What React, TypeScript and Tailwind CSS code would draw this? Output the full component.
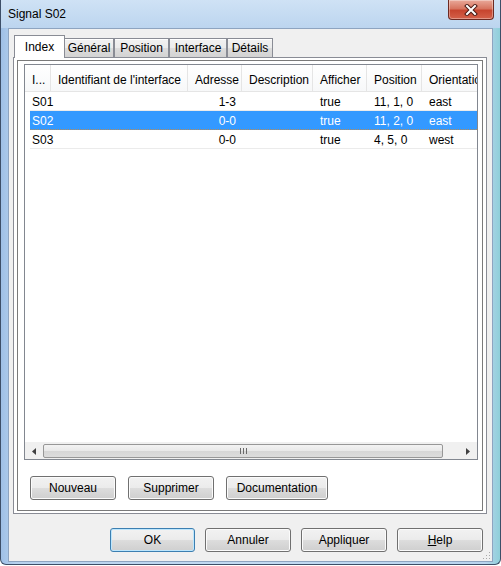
import React from 'react';

type Col = { label: string; w: number };

const cols: Col[] = [
  { label: 'I...', w: 26 },
  { label: "Identifiant de l'interface", w: 137 },
  { label: 'Adresse', w: 54 },
  { label: 'Description', w: 71 },
  { label: 'Afficher', w: 54 },
  { label: 'Position', w: 55 },
  { label: 'Orientation', w: 90 },
];

const rows = [
  { id: 'S01', adr: '1-3', show: 'true', pos: '11, 1, 0', ori: 'east' },
  { id: 'S02', adr: '0-0', show: 'true', pos: '11, 2, 0', ori: 'east', sel: true },
  { id: 'S03', adr: '0-0', show: 'true', pos: '4, 5, 0', ori: 'west' },
];

const btn =
  'h-[24px] border rounded-[3px] bg-[linear-gradient(#f2f2f2_0%,#ebebeb_50%,#dddddd_50%,#cfcfcf_100%)] text-[12px] text-black flex items-center justify-center';

const Button = ({ label, w, primary }: { label: React.ReactNode; w: number; primary?: boolean }) => (
  <div
    className={
      btn +
      (primary
        ? ' border-[#3c7fb1] shadow-[inset_0_0_0_1px_#bde6fd]'
        : ' border-[#707070] shadow-[inset_0_0_0_1px_#fbfbfb]')
    }
    style={{ width: w }}
  >
    {label}
  </div>
);

const Tab = ({ label, w, active }: { label: string; w: number; active?: boolean }) =>
  active ? (
    <div
      className="relative z-10 h-[23px] -mb-px -mr-px border border-b-0 border-[#898c95] bg-white flex items-center justify-center text-[12px] pb-[1px]"
      style={{ width: w }}
    >
      {label}
    </div>
  ) : (
    <div
      className="h-[19px] border border-b-0 border-[#898c95] bg-[linear-gradient(#f2f2f2,#ebebeb_50%,#dddddd_50%,#d3d3d3)] flex items-center justify-center text-[12px] shadow-[inset_0_1px_0_#fff]"
      style={{ width: w }}
    >
      {label}
    </div>
  );

const CloseButton = () => (
  <div className="w-[46px] h-[20px] rounded-b-[4px] border border-t-0 border-[#6d2a22] bg-[linear-gradient(#e9a99a,#d77560_45%,#c7452f_55%,#d4614a)] shadow-[inset_0_0_0_1px_rgba(255,255,255,0.35)] flex items-center justify-center">
    <svg width="14" height="12" viewBox="0 0 14 12">
      <path d="M3 2 L11 10 M11 2 L3 10" stroke="#4a1a14" strokeWidth="4" strokeLinecap="square" />
      <path d="M3 2 L11 10 M11 2 L3 10" stroke="#ffffff" strokeWidth="2" strokeLinecap="square" />
    </svg>
  </div>
);

const ScrollBar = () => (
  <div className="h-[17px] flex bg-[#f0f0f0] border-t border-[#f0f0f0]">
    <div className="w-[18px] flex items-center justify-center">
      <svg width="4" height="7" viewBox="0 0 4 7">
        <path d="M4 0 L0 3.5 L4 7 Z" fill="#404040" />
      </svg>
    </div>
    <div className="w-[400px] my-[1px] rounded-[2px] border border-[#979797] bg-[linear-gradient(#f3f3f3,#e8e8e8_50%,#d6d6d6_50%,#dcdcdc)] flex items-center justify-center">
      <svg width="7" height="6" viewBox="0 0 7 6">
        <path d="M0.5 0 V6 M3.5 0 V6 M6.5 0 V6" stroke="#6a6a6a" strokeWidth="1" />
      </svg>
    </div>
    <div className="flex-1 flex items-center justify-end pr-[7px]">
      <svg width="4" height="7" viewBox="0 0 4 7">
        <path d="M0 0 L4 3.5 L0 7 Z" fill="#404040" />
      </svg>
    </div>
  </div>
);

const Table = () => (
  <div className="w-[454px] h-[396px] border border-[#828790] bg-white flex flex-col overflow-hidden">
    <div className="h-[27px] flex bg-[linear-gradient(#ffffff,#f7f8f9)] border-b border-[#e5e5e5] shrink-0">
      {cols.map((c) => (
        <div
          key={c.label}
          className="h-full shrink-0 border-r border-[#e5e5e5] flex items-center pl-[7px] pt-[3px] whitespace-nowrap overflow-hidden text-[12px]"
          style={{ width: c.w }}
        >
          {c.label}
        </div>
      ))}
    </div>
    <div className="flex-1 pl-[5px]">
      {rows.map((r) => (
        <div
          key={r.id}
          className={
            'h-[19px] pt-[1px] flex text-[12px] whitespace-nowrap ' +
            (r.sel
              ? 'bg-[#3399ff] text-white border-b border-dotted border-[#b98a52]'
              : 'text-black border-b border-[#ebebeb]')
          }
        >
          <div className="w-[21px] pl-[2px] flex items-center">{r.id}</div>
          <div className="w-[137px]" />
          <div className="w-[54px] pr-[6px] flex items-center justify-end">{r.adr}</div>
          <div className="w-[71px]" />
          <div className="w-[54px] pl-[7px] flex items-center">{r.show}</div>
          <div className="w-[55px] pl-[7px] flex items-center">{r.pos}</div>
          <div className="flex-1 pl-[7px] flex items-center">{r.ori}</div>
        </div>
      ))}
    </div>
    <ScrollBar />
  </div>
);

export default function App() {
  return (
    <div className="w-[501px] h-[566px] overflow-hidden bg-white font-['Liberation_Sans',Arial,sans-serif] text-black">
      <div className="w-[501px] h-[565px] flex flex-col rounded-b-[6px] border border-t-0 border-[#3d4f68] bg-[linear-gradient(90deg,#9fc0e6,#b7d2ee_3%,#c3dbf2_50%,#b9d4ee_97%,#8fcfd9)]">
        <div className="h-[28px] flex items-start bg-[linear-gradient(#cfe2f5,#bcd5ef)] shrink-0">
          <div className="pl-[7px] pt-[7px] text-[12px] leading-[15px]">Signal S02</div>
          <div className="ml-auto mr-[6px]">
            <CloseButton />
          </div>
        </div>
        <div className="mx-[7px] h-[534px] border border-[#8ea4c0] bg-[#f0f0f0] flex flex-col">
          <div className="pt-[6px] pl-[5px] flex items-end">
            <Tab label="Index" w={51} active />
            <Tab label="Général" w={50} />
            <Tab label="Position" w={55} />
            <Tab label="Interface" w={58} />
            <Tab label="Détails" w={46} />
          </div>
          <div className="ml-[4px] w-[474px] h-[457px] border border-[#898c95] bg-white pt-[2px] pl-[3px] pr-[3px] pb-[2px]">
            <div className="h-full border border-[#7a7a7a] pt-[3px] pl-[6px] flex flex-col">
              <Table />
              <div className="mt-[16px] ml-[6px] flex gap-[12px]">
                <Button label="Nouveau" w={86} />
                <Button label="Supprimer" w={86} />
                <Button label="Documentation" w={102} />
              </div>
            </div>
          </div>
          <div className="mt-[14px] pr-[9px] flex justify-end gap-[10px] relative">
            <Button label="OK" w={85} primary />
            <Button label="Annuler" w={86} />
            <Button label="Appliquer" w={86} />
            <Button
              label={
                <span>
                  <span className="underline">H</span>elp
                </span>
              }
              w={86}
            />
          </div>
          <div className="mt-auto mb-[1px] mr-[1px] self-end">
            <svg width="8" height="8" viewBox="0 0 8 8">
              <g fill="#a9a9a9">
                <rect x="6" y="0" width="1" height="1" />
                <rect x="3" y="3" width="1" height="1" />
                <rect x="6" y="3" width="1" height="1" />
                <rect x="0" y="6" width="1" height="1" />
                <rect x="3" y="6" width="1" height="1" />
                <rect x="6" y="6" width="1" height="1" />
              </g>
            </svg>
          </div>
        </div>
      </div>
    </div>
  );
}
